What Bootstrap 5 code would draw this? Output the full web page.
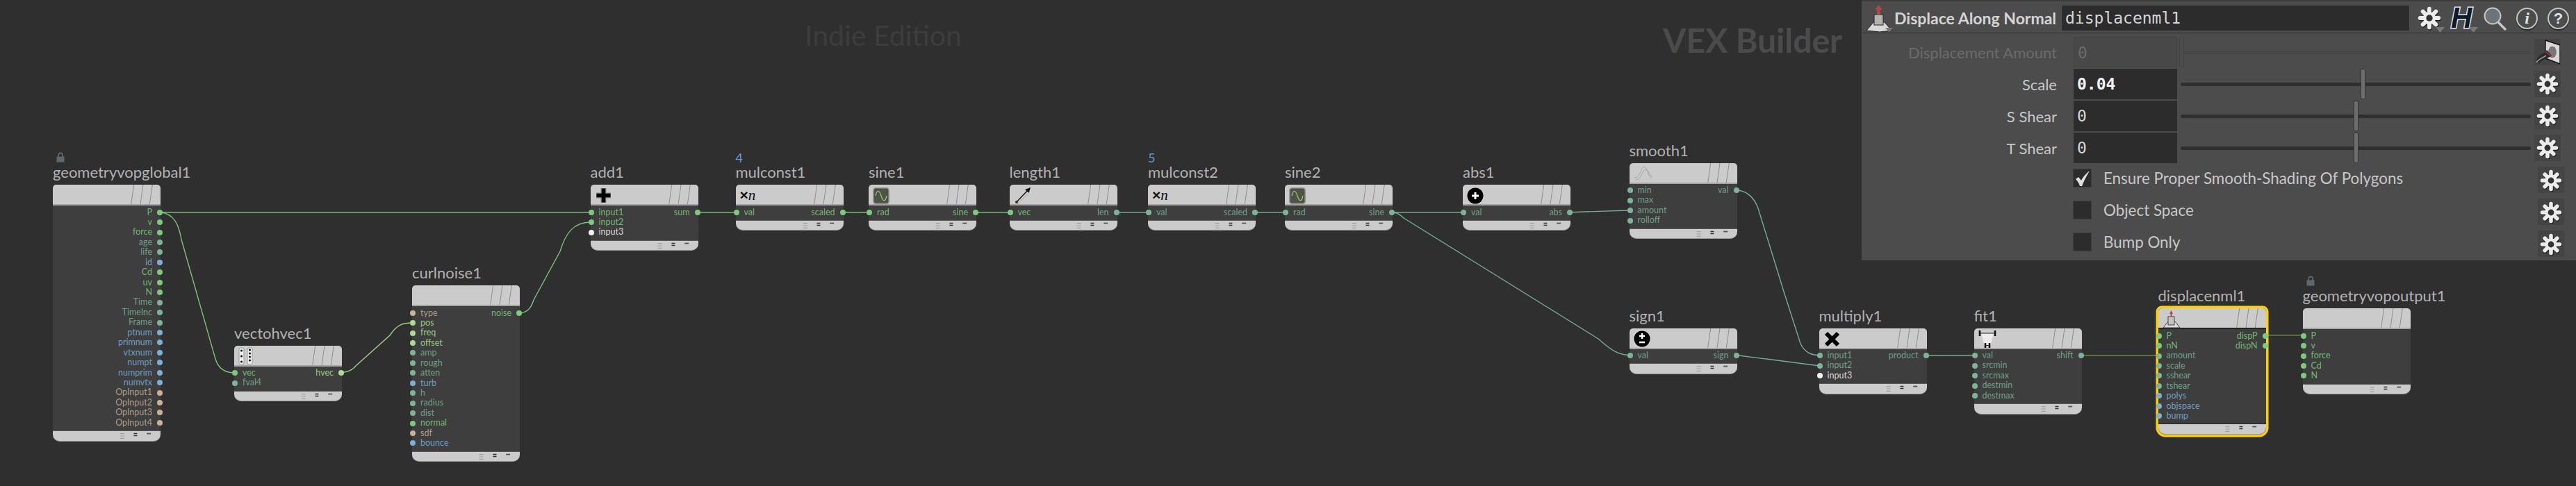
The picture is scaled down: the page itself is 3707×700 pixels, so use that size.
<!DOCTYPE html>
<html lang="en">
<head>
    <meta charset="UTF-8">
    <title>VEX Builder</title>
    <link href="https://cdn.jsdelivr.net/npm/bootstrap@5.3.0/dist/css/bootstrap.min.css" rel="stylesheet">
    <style>
        body {
            background-color: #2f2f2f;
            font-family: "Lato", "Liberation Sans", sans-serif;
            overflow: hidden;
        }

        .net-canvas {
            width: 3707px;
            height: 700px;
            background: #2f2f2f;
        }

        .wires {
            left: 0;
            top: 0;
        }

        .wires path {
            fill: none;
            stroke-width: 1.4;
        }

        .wm-indie {
            left: 1158px;
            top: 26px;
            font-size: 41px;
            line-height: 50px;
            color: #3d3d3d;
        }

        .wm-vex {
            left: 2393px;
            top: 30px;
            font-size: 48px;
            line-height: 56px;
            font-weight: 700;
            color: #4b4b4b;
        }

        /* nodes */
        .vop-node {
            width: 155px;
        }

        .vop-title {
            height: 27px;
            line-height: 18px;
            font-size: 22px;
            color: #b2b2b2;
            white-space: nowrap;
        }

        .vop-note {
            left: 0;
            bottom: 100%;
            margin-bottom: 2px;
            color: #669ad6;
            font-size: 18px;
            line-height: 20px;
        }

        .vop-lock {
            left: 5px;
            bottom: 100%;
            margin-bottom: 5px;
        }

        .vop-card {
            border-radius: 5px 5px 10px 10px;
        }

        .vop-node.picked .vop-card {
            box-shadow: 0 0 0 3.5px #ffcf00;
        }

        .vop-node.picked .vop-head {
            border-bottom-color: #222;
        }

        .vop-node.picked .vop-foot {
            border-top-color: #222;
        }

        .vop-head {
            height: 30px;
            padding: 2px 6px;
            background: #cbcbcb;
            border-bottom: 2px solid #a4a4a4;
            border-radius: 5px 5px 0 0;
        }

        .vop-stripes {
            left: 0;
            top: 0;
        }

        .vop-body {
            padding: 2.5px 0 4px;
            background: #3e3e3e;
        }

        .vop-foot {
            height: 15.5px;
            background: #cbcbcb;
            border-top: 1px solid #5a5a5a;
            border-bottom: 1px solid #9a9a9a;
            border-radius: 0 0 10px 10px;
        }

        .vop-foot svg {
            display: block;
        }

        .vop-port {
            height: 14.45px;
            line-height: 14.45px;
            font-size: 12.5px;
            white-space: nowrap;
        }

        .vop-port i {
            display: block;
            flex: none;
            width: 8px;
            height: 8px;
            border-radius: 50%;
        }

        .port-in i {
            margin: 0 7px 0 -3px;
        }

        .port-out i {
            margin: 0 -3px 0 7px;
        }

        .pt-g i { background: #7bcb7b; }
        .pt-g span { color: #72b672; }
        .pt-t i { background: #7cb49a; }
        .pt-t span { color: #6f9f88; }
        .pt-b i { background: #79b0d6; }
        .pt-b span { color: #6f9fc0; }
        .pt-s i { background: #ccb196; }
        .pt-s span { color: #ad9c88; }
        .pt-l i { background: #a9dc8c; }
        .pt-l span { color: #9cc884; }
        .pt-w i { background: #f2f2f2; }
        .pt-w span { color: #d8d8d8; }

        .mul-glyph {
            font-family: "Liberation Serif", serif;
            font-size: 21px;
            line-height: 26px;
            color: #111;
        }

        .mul-glyph b {
            font-family: "Liberation Sans", sans-serif;
        }

        /* parameter pane */
        .parm-pane {
            right: 0;
            top: 0;
            width: 1028px;
            height: 375px;
            background: #4c4c4c;
            border-top: 2px solid #3c3c3c;
            color: #c8c8c8;
        }

        .pane-head {
            height: 46px;
            margin-left: 2px;
            margin-bottom: 4px;
            padding-left: 4px;
            padding-top: 3px;
            border-bottom: 1px solid #2e2e2e;
        }

        .pane-title {
            width: 242px;
            padding-left: 1px;
            font-size: 23px;
            font-weight: 700;
            color: #d4d4d4;
            white-space: nowrap;
        }

        .pane-name {
            width: 500px;
            height: 36px;
            padding: 0 5px;
            line-height: 36px;
            background: #2c2c2c;
            font-family: "DejaVu Sans Mono", monospace;
            font-size: 23px;
            color: #d6d6d6;
        }

        .pane-tools {
            margin-left: 12px;
            gap: 14px;
        }

        .tool-h {
            width: 32px;
            font-family: "Liberation Sans", sans-serif;
            font-size: 42px;
            line-height: 36px;
            font-weight: 700;
            font-style: italic;
            color: #0c1a2b;
            -webkit-text-stroke: 3px #e6e6e6;
            paint-order: stroke fill;
        }

        .tool-ring {
            width: 31px;
            height: 31px;
            border: 2px solid #c4c4c4;
            box-shadow: 0 2px 1px #2a2a2a;
            color: #e2e2e2;
            font-family: "Liberation Serif", serif;
            font-size: 24px;
            font-style: italic;
            font-weight: 700;
        }

        .tool-ring.ask {
            font-family: "Liberation Sans", sans-serif;
            font-style: normal;
            font-size: 22px;
        }

        .parm-row {
            height: 46px;
        }

        .parm-label {
            width: 281px;
            text-align: right;
            font-size: 22px;
            white-space: nowrap;
        }

        .parm-label.off,
        .parm-value.off {
            color: #6b6b6b;
        }

        .parm-value {
            width: 149px;
            height: 44px;
            margin-left: 24px;
            padding: 0 5px;
            line-height: 44px;
            background: #2c2c2c;
            font-family: "DejaVu Sans Mono", monospace;
            font-size: 23px;
            color: #d6d6d6;
        }

        .parm-value.off {
            background: #484848;
            border: 1px solid #424242;
        }

        .parm-value.set {
            color: #f4f4f4;
            font-weight: 700;
        }

        .parm-slider {
            width: 504px;
            height: 44px;
            margin-left: 5px;
        }

        .parm-track {
            left: 0;
            right: 0;
            top: 19.5px;
            height: 5px;
            background: #2f2f2f;
            border-radius: 3px;
        }

        .parm-slider.off .parm-track {
            background: #464646;
        }

        .parm-knob {
            top: 0;
            width: 7px;
            height: 44px;
            margin-left: -3px;
            background: #6d6d6d;
            border: 1.5px solid #333;
            border-radius: 2px;
        }

        .parm-slider.off .parm-knob {
            background: #4c4c4c;
            border-color: #444;
        }

        .knob-scale { left: 262px; }
        .knob-shear { left: 252px; }
        .knob-off { left: 0; margin-left: -2px; }

        .parm-gear {
            width: 38px;
            height: 38px;
            margin-left: 5px;
            background: #444;
        }

        .parm-check {
            width: 27px;
            height: 27px;
            margin: -5px 0 0 304px;
            background: #2c2c2c;
            border: 1px solid #3c3c3c;
        }

        .parm-text {
            width: 620px;
            margin: -5px 0 0 17px;
            font-size: 22.4px;
            white-space: nowrap;
        }
    </style>
</head>
<body>
    <svg width="0" height="0" class="d-block">
        <defs>
            <symbol id="gear" viewBox="0 0 32 32">
                <g stroke="#1d1d1d" stroke-width="5.5" stroke-linecap="round" transform="translate(0.8 1.2)">
                    <path d="M16 3.5V28.5M3.5 16H28.5M7.2 7.2L24.8 24.8M24.8 7.2L7.2 24.8"/>
                </g>
                <g stroke="#ececec" stroke-width="5.5" stroke-linecap="round">
                    <path d="M16 3.5V28.5M3.5 16H28.5M7.2 7.2L24.8 24.8M24.8 7.2L7.2 24.8"/>
                </g>
                <circle cx="16" cy="16" r="8.5" fill="#ececec"/>
                <circle cx="16" cy="16" r="4.4" fill="#333"/>
            </symbol>
            <symbol id="stripes" viewBox="0 0 155 28">
                <path d="M112.7 28L116.7 0M126 28L130 0M139.3 28L143.3 0" stroke="#8d8d8d" stroke-width="1" fill="none"/>
            </symbol>
            <symbol id="footmarks" viewBox="0 0 155 14">
                <path d="M98 3.5h6M98 7h6M98 10.5h6" stroke="#a0a0a0" stroke-width="1.2"/>
                <path d="M118 3.5h5M118 6.5h5" stroke="#333" stroke-width="1.4"/>
                <path d="M137 3.5h6" stroke="#555" stroke-width="1.8"/>
            </symbol>
            <symbol id="padlock" viewBox="0 0 12 15">
                <path d="M3 7V4.5a3 3 0 0 1 6 0V7" fill="none" stroke="#5f686c" stroke-width="1.8"/>
                <rect x="0.5" y="6.5" width="11" height="8" fill="#5f686c"/>
            </symbol>
            <symbol id="sinebox" viewBox="0 0 24 24">
                <rect x="0.8" y="0.8" width="22.4" height="22.4" rx="3.5" fill="#4d5444" stroke="#969696" stroke-width="1.6"/>
                <path d="M4 12C6 3 9 3 12 12S18 21 20 12" fill="none" stroke="#a9c48a" stroke-width="1.2"/>
            </symbol>
        </defs>
    </svg>

    <div class="net-canvas position-relative overflow-hidden">
        <div class="wm-indie position-absolute">Indie Edition</div>
        <div class="wm-vex position-absolute">VEX Builder</div>

        <svg class="wires position-absolute" width="3707" height="700" viewBox="0 0 3707 700">
            <g stroke="#77c477">
                <path d="M231 305.7H850"/>
                <path d="M231 305.7C250 308 257 322 261 345L310 517C314 530 322 537 337 536.7"/>
                <path d="M748 451C758 450 764 445 768 432L806 362C814 335 826 320 850 320"/>
                <path d="M1004 305.7H1059" stroke-width="1.6"/>
                <path d="M1213 305.7H1250" stroke-width="1.6"/>
                <path d="M1405 305.7H1453" stroke-width="1.6"/>
            </g>
            <path d="M491 536.7C500 536 506 534 512 527L561 483C572 466 582 465 593 465" stroke="#a3cf84"/>
            <g stroke="#74ad93">
                <path d="M1608 305.7H1652" stroke-width="1.6"/>
                <path d="M1807 305.7H1849" stroke-width="1.6"/>
                <path d="M2004 305.7H2105" stroke-width="1.6"/>
                <path d="M2260 305.7L2344 303" stroke-width="2"/>
                <path d="M2004 305.7C2010 306 2014 308 2020 314L2300 488C2320 506 2330 511 2345 511.7"/>
                <path d="M2500 274C2515 275 2525 286 2530 300L2567 420L2591 495C2597 507 2605 511 2617 511.7"/>
                <path d="M2500 511.7L2617 526.7" stroke-width="2"/>
                <path d="M2772 511.7H2841" stroke-width="2.4"/>
            </g>
            <g stroke="#6e8a3e" stroke-width="2.2">
                <path d="M2996 511.7H3106"/>
                <path d="M3260 482.7H3313"/>
            </g>
        </svg>

        <div id="nodes"></div>

        <div class="parm-pane position-absolute">
            <div class="pane-head d-flex align-items-center">
                <svg width="40" height="40" viewBox="0 0 40 40" class="flex-shrink-0">
                    <path d="M1 38L11 26H27L33 33L38 38L20 40Z" fill="#d8d8d8" stroke="#222"/>
                    <path d="M28 34H39L33.5 40Z" fill="#7a7a7a"/>
                    <rect x="12" y="15" width="13" height="15" fill="#b4b4b4" stroke="#222"/>
                    <path d="M18.5 1L24 8H21V15H16V8H13Z" fill="#b04545"/>
                </svg>
                <div class="pane-title flex-shrink-0">Displace Along Normal</div>
                <div class="pane-name flex-shrink-0">displacenml1</div>
                <div class="pane-tools d-flex align-items-center">
                    <span class="position-relative d-block">
                        <svg width="34" height="36" class="d-block"><use href="#gear"/></svg>
                        <svg width="13" height="8" class="position-absolute" style="left:26px;top:31px"><path d="M0 0H13L6.5 8Z" fill="#777"/></svg>
                    </span>
                    <span class="tool-h position-relative d-block">H
                        <svg width="13" height="8" class="position-absolute" style="left:26px;top:31px"><path d="M0 0H13L6.5 8Z" fill="#777"/></svg>
                    </span>
                    <svg width="34" height="36" viewBox="0 0 34 36" class="d-block">
                        <path d="M21 23L32 34" stroke="#c6c6c6" stroke-width="3.4" stroke-linecap="round"/>
                        <circle cx="14" cy="15" r="11.5" fill="#69757a" stroke="#c6c6c6" stroke-width="2"/>
                    </svg>
                    <span class="tool-ring rounded-circle d-flex align-items-center justify-content-center">i</span>
                    <span class="tool-ring ask rounded-circle d-flex align-items-center justify-content-center">?</span>
                </div>
            </div>

            <div class="parm-row d-flex align-items-center">
                <div class="parm-label off">Displacement Amount</div>
                <div class="parm-value off">0</div>
                <div class="parm-slider off position-relative">
                    <div class="parm-track position-absolute"></div>
                    <div class="parm-knob knob-off position-absolute"></div>
                </div>
                <div class="parm-gear d-flex align-items-center justify-content-center">
                    <svg width="36" height="38" viewBox="0 0 36 38">
                        <path d="M15 2L36 9V36L15 28Z" fill="#d6d6d6" stroke="#111" stroke-width="1.4"/>
                        <ellipse cx="25" cy="19" rx="6.5" ry="9" fill="#777" stroke="#eee"/>
                        <path d="M2 30C6 22 12 22 17 16L24 24C20 28 12 28 6 36Z" fill="#2b2b2b"/>
                        <path d="M15 18L23 25" stroke="#a52a2a" stroke-width="2"/>
                        <path d="M2 34C6 28 12 27 16 24" stroke="#aaa" stroke-width="1.2" fill="none"/>
                    </svg>
                </div>
            </div>
            <div class="parm-row d-flex align-items-center">
                <div class="parm-label">Scale</div>
                <div class="parm-value set">0.04</div>
                <div class="parm-slider position-relative">
                    <div class="parm-track position-absolute"></div>
                    <div class="parm-knob knob-scale position-absolute"></div>
                </div>
                <div class="parm-gear d-flex align-items-center justify-content-center"><svg width="32" height="32"><use href="#gear"/></svg></div>
            </div>
            <div class="parm-row d-flex align-items-center">
                <div class="parm-label">S Shear</div>
                <div class="parm-value">0</div>
                <div class="parm-slider position-relative">
                    <div class="parm-track position-absolute"></div>
                    <div class="parm-knob knob-shear position-absolute"></div>
                </div>
                <div class="parm-gear d-flex align-items-center justify-content-center"><svg width="32" height="32"><use href="#gear"/></svg></div>
            </div>
            <div class="parm-row d-flex align-items-center">
                <div class="parm-label">T Shear</div>
                <div class="parm-value">0</div>
                <div class="parm-slider position-relative">
                    <div class="parm-track position-absolute"></div>
                    <div class="parm-knob knob-shear position-absolute"></div>
                </div>
                <div class="parm-gear d-flex align-items-center justify-content-center"><svg width="32" height="32"><use href="#gear"/></svg></div>
            </div>
            <div class="parm-row d-flex align-items-center">
                <div class="parm-check d-flex align-items-center justify-content-center">
                    <svg width="24" height="24" viewBox="0 0 24 24"><path d="M2 13L6 10L10 15C13 9 17 5 22 1C18 8 14 15 11 23H8C7 19 5 16 2 13Z" fill="#e0e0e0"/></svg>
                </div>
                <div class="parm-text">Ensure Proper Smooth-Shading Of Polygons</div>
                <div class="parm-gear"><svg width="32" height="32" class="d-block mx-auto my-1"><use href="#gear"/></svg></div>
            </div>
            <div class="parm-row d-flex align-items-center">
                <div class="parm-check"></div>
                <div class="parm-text">Object Space</div>
                <div class="parm-gear"><svg width="32" height="32" class="d-block mx-auto my-1"><use href="#gear"/></svg></div>
            </div>
            <div class="parm-row d-flex align-items-center">
                <div class="parm-check"></div>
                <div class="parm-text">Bump Only</div>
                <div class="parm-gear"><svg width="32" height="32" class="d-block mx-auto my-1"><use href="#gear"/></svg></div>
            </div>
        </div>
    </div>

    <script src="https://cdn.jsdelivr.net/npm/bootstrap@5.3.0/dist/js/bootstrap.bundle.min.js"></script>
    <script>
        // header pictures of the nodes
        const sineIcon = '<svg width="24" height="24"><use href="#sinebox"/></svg>';
        const icons = {
            plus: '<svg width="25" height="25" viewBox="0 0 25 25"><path d="M12.5 2V23M2 12.5H23" stroke="#888" stroke-width="8"/><path d="M12.5 2.5V22.5M2.5 12.5H22.5" stroke="#000" stroke-width="5.5"/></svg>',
            mul: '<div class="mul-glyph"><b>×</b><em>n</em></div>',
            sine: sineIcon,
            length: '<svg width="26" height="26" viewBox="0 0 26 26"><path d="M3 23L21 4" stroke="#111" stroke-width="1.4"/><path d="M24 1L21.5 9L16 4Z" fill="#111"/><path d="M5 25L23 7" stroke="#c8a0a0" stroke-width="1"/><circle cx="4" cy="22" r="2" fill="#333"/></svg>',
            abs: '<svg width="24" height="24" viewBox="0 0 24 24"><circle cx="12" cy="12" r="11.5" fill="#000"/><path d="M12 7V17M7 12H17" stroke="#fff" stroke-width="3"/></svg>',
            bell: '<svg width="28" height="24" viewBox="0 0 28 24" fill="none" stroke="#a8a8a8" stroke-width="1"><path d="M1 18C10 18 10 2 15 2S20 18 26 18"/><path d="M3 21C12 20 12 6 17 6S22 16 27 16"/></svg>',
            sign: '<svg width="24" height="24" viewBox="0 0 24 24"><circle cx="12" cy="12" r="11.5" fill="#000"/><path d="M12 4V12M8 8H16M8 17H16" stroke="#fff" stroke-width="2.4"/></svg>',
            times: '<svg width="25" height="25" viewBox="0 0 25 25"><path d="M4 4L21 21M21 4L4 21" stroke="#000" stroke-width="6"/></svg>',
            fit: '<svg width="26" height="26" viewBox="0 0 26 26"><path d="M4 5H22L17 24H9Z" fill="#ececec"/><path d="M2 1V9M24 1V9M10 19V26M16 19V26" stroke="#111" stroke-width="2.6"/><path d="M2 5H24M10 22.5H16" stroke="#222" stroke-width="1.2"/></svg>',
            vec: '<svg width="22" height="26" viewBox="0 0 22 26"><rect x="1" y="1" width="7" height="24" rx="2" fill="#eee" stroke="#999"/><rect x="13" y="1" width="7" height="24" rx="2" fill="#eee" stroke="#999"/><path d="M4.5 5v.01M4.5 13v.01M4.5 21v.01M16.5 4v.01M16.5 9v.01M16.5 14v.01M16.5 19v.01" stroke="#111" stroke-width="3" stroke-linecap="round"/></svg>',
            disp: '<svg width="26" height="26" viewBox="0 0 26 26"><path d="M1 25L8 16H18L25 25Z" fill="#ddd" stroke="#444"/><rect x="8" y="9" width="9" height="12" fill="#c4c4c4" stroke="#444"/><path d="M12.5 0L15 5H13.5V9H11.5V5H10Z" fill="#b04545"/></svg>'
        };

        function ports(names, type) {
            return names.map(n => n + ':' + type);
        }

        const nodes = [
            { name: 'geometryvopglobal1', x: 76, y: 266, lock: true, outs: [...ports(['P', 'v', 'force'], 'g'), ...ports(['age', 'life'], 't'), 'id:b', ...ports(['Cd', 'uv', 'N'], 'g'), ...ports(['Time', 'TimeInc', 'Frame'], 't'), ...ports(['ptnum', 'primnum', 'vtxnum', 'numpt', 'numprim', 'numvtx'], 'b'), ...ports(['OpInput1', 'OpInput2', 'OpInput3', 'OpInput4'], 's')] },
            { name: 'vectohvec1', x: 337, y: 497.5, icon: 'vec', ins: ['vec:g', 'fval4:t'], outs: ['hvec:l'] },
            { name: 'curlnoise1', x: 593, y: 411, ins: ['type:s', 'pos:l', 'freq:l', 'offset:l', 'amp:t', 'rough:t', 'atten:t', 'turb:b', 'h:t', 'radius:t', 'dist:t', 'normal:g', 'sdf:s', 'bounce:b'], outs: ['noise:g'] },
            { name: 'add1', x: 849.5, y: 266, icon: 'plus', ins: ['input1:g', 'input2:g', 'input3:w'], outs: ['sum:g'] },
            { name: 'mulconst1', x: 1058.5, y: 266, note: '4', icon: 'mul', ins: ['val:g'], outs: ['scaled:g'] },
            { name: 'sine1', x: 1250, y: 266, icon: 'sine', ins: ['rad:g'], outs: ['sine:g'] },
            { name: 'length1', x: 1452.5, y: 266, icon: 'length', ins: ['vec:g'], outs: ['len:t'] },
            { name: 'mulconst2', x: 1652, y: 266, note: '5', icon: 'mul', ins: ['val:t'], outs: ['scaled:t'] },
            { name: 'sine2', x: 1849, y: 266, icon: 'sine', ins: ['rad:t'], outs: ['sine:t'] },
            { name: 'abs1', x: 2105, y: 266, icon: 'abs', ins: ['val:t'], outs: ['abs:t'] },
            { name: 'smooth1', x: 2344.5, y: 234.5, icon: 'bell', ins: ['min:t', 'max:t', 'amount:t', 'rolloff:t'], outs: ['val:t'] },
            { name: 'sign1', x: 2344.5, y: 472.5, icon: 'sign', ins: ['val:t'], outs: ['sign:t'] },
            { name: 'multiply1', x: 2617.5, y: 472.5, icon: 'times', ins: ['input1:t', 'input2:t', 'input3:w'], outs: ['product:t'] },
            { name: 'fit1', x: 2840.5, y: 472.5, icon: 'fit', ins: ['val:t', 'srcmin:t', 'srcmax:t', 'destmin:t', 'destmax:t'], outs: ['shift:t'] },
            { name: 'displacenml1', x: 3105.5, y: 444, picked: true, icon: 'disp', ins: [...ports(['P', 'nN'], 'g'), ...ports(['amount', 'scale', 'sshear', 'tshear'], 't'), ...ports(['polys', 'objspace', 'bump'], 'b')], outs: ['dispP:g', 'dispN:g'] },
            { name: 'geometryvopoutput1', x: 3313.5, y: 444, lock: true, ins: ports(['P', 'v', 'force', 'Cd', 'N'], 'g') }
        ];

        function portHtml(p, side) {
            const [label, type] = p.split(':');
            const dot = '<i></i>', text = `<span>${label}</span>`;
            return `<div class="vop-port port-${side} pt-${type} d-flex align-items-center">`
                + (side === 'in' ? dot + text : text + dot) + '</div>';
        }

        document.getElementById('nodes').innerHTML = nodes.map(n => `
            <div class="vop-node position-absolute${n.picked ? ' picked' : ''}" style="left:${n.x}px;top:${n.y - 27}px">
                <div class="vop-title position-relative">
                    ${n.note ? `<div class="vop-note position-absolute">${n.note}</div>` : ''}
                    ${n.lock ? '<svg class="vop-lock position-absolute" width="12" height="15"><use href="#padlock"/></svg>' : ''}
                    ${n.name}
                </div>
                <div class="vop-card">
                    <div class="vop-head position-relative">
                        <svg class="vop-stripes position-absolute" width="155" height="28"><use href="#stripes"/></svg>
                        ${n.icon ? icons[n.icon] : ''}
                    </div>
                    <div class="vop-body d-flex justify-content-between">
                        <div>${(n.ins || []).map(p => portHtml(p, 'in')).join('')}</div>
                        <div class="d-flex flex-column align-items-end">${(n.outs || []).map(p => portHtml(p, 'out')).join('')}</div>
                    </div>
                    <div class="vop-foot"><svg width="153" height="14"><use href="#footmarks"/></svg></div>
                </div>
            </div>`).join('');
    </script>
</body>
</html>
